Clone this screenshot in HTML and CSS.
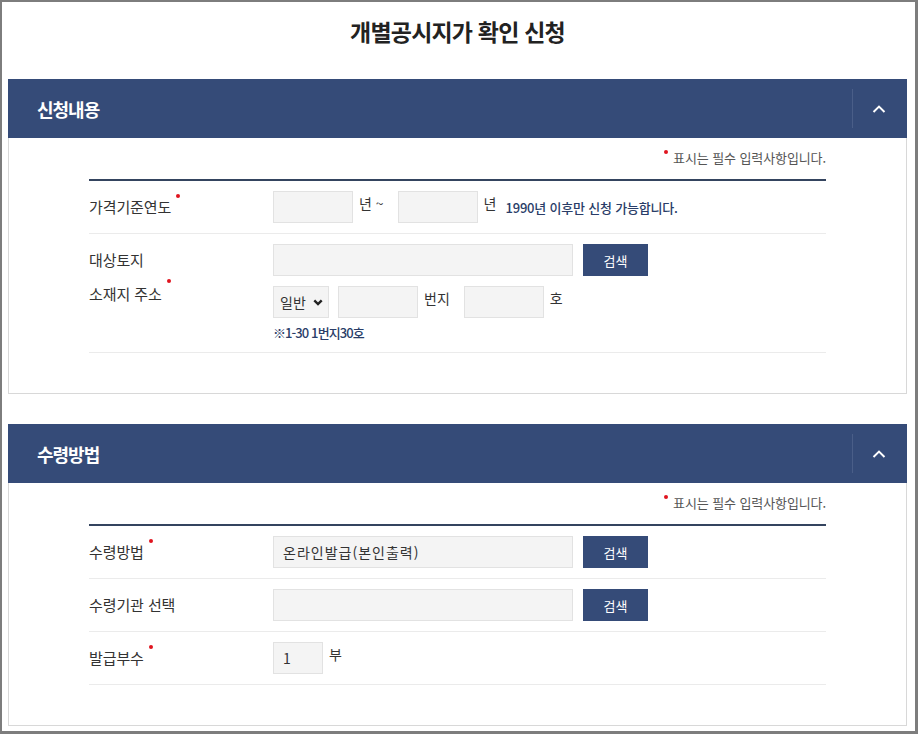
FILE: index.html
```html
<!DOCTYPE html>
<html lang="ko">
<head>
<meta charset="utf-8">
<title>개별공시지가 확인 신청</title>
<link rel="stylesheet" href="styles.css">
</head>
<body>
<div class="frame">
  <h1 class="title">개별공시지가 확인 신청</h1>

  <section class="panel">
    <div class="panel-head">
      <h2 class="panel-title">신청내용</h2>
      <button class="toggle" type="button" aria-label="접기">
        <svg width="14" height="8" viewBox="0 0 14 8"><polyline points="1.5,7 7,1.6 12.5,7" fill="none" stroke="#fff" stroke-width="2"/></svg>
      </button>
    </div>
    <div class="panel-body">
      <p class="req-note"><span class="dot"></span>표시는 필수 입력사항입니다.</p>
      <div class="rows">
        <div class="row">
          <div class="label"><span class="req">가격기준연도</span></div>
          <div class="field">
            <input class="inp w80" type="text">
            <span class="unit">년 ~</span>
            <input class="inp w80" type="text">
            <span class="unit">년</span>
            <span class="hint">1990년 이후만 신청 가능합니다.</span>
          </div>
        </div>
        <div class="row">
          <div class="label label-stack">
            <span class="line1">대상토지</span>
            <span class="line2"><span class="req">소재지 주소</span></span>
          </div>
          <div class="field-stack">
            <div class="field">
              <input class="inp w300" type="text">
              <button class="btn" type="button">검색</button>
            </div>
            <div class="field">
              <span class="sel-wrap">
                <select class="sel"><option>일반</option><option>산</option></select>
                <svg class="sel-arrow" width="10" height="7" viewBox="0 0 10 7"><polyline points="1.3,1.3 5,5 8.7,1.3" fill="none" stroke="#222" stroke-width="2.4"/></svg>
              </span>
              <input class="inp w80" type="text">
              <span class="unit">번지</span>
              <input class="inp w80" type="text">
              <span class="unit">호</span>
            </div>
            <p class="sub-hint">※1-30 1번지30호</p>
          </div>
        </div>
      </div>
    </div>
  </section>

  <section class="panel panel-second">
    <div class="panel-head">
      <h2 class="panel-title">수령방법</h2>
      <button class="toggle" type="button" aria-label="접기">
        <svg width="14" height="8" viewBox="0 0 14 8"><polyline points="1.5,7 7,1.6 12.5,7" fill="none" stroke="#fff" stroke-width="2"/></svg>
      </button>
    </div>
    <div class="panel-body">
      <p class="req-note"><span class="dot"></span>표시는 필수 입력사항입니다.</p>
      <div class="rows">
        <div class="row">
          <div class="label"><span class="req">수령방법</span></div>
          <div class="field">
            <input class="inp w300" type="text" value="온라인발급(본인출력)">
            <button class="btn" type="button">검색</button>
          </div>
        </div>
        <div class="row">
          <div class="label">수령기관 선택</div>
          <div class="field">
            <input class="inp w300" type="text">
            <button class="btn" type="button">검색</button>
          </div>
        </div>
        <div class="row">
          <div class="label"><span class="req">발급부수</span></div>
          <div class="field">
            <input class="inp w50" type="text" value="1">
            <span class="unit">부</span>
          </div>
        </div>
      </div>
    </div>
  </section>
</div>
</body>
</html>
```

FILE: styles.css
```css
* { box-sizing: border-box; }

html, body {
  margin: 0;
  padding: 0;
  background: #fff;
}

body {
  font-family: "Noto Sans CJK KR", "Noto Sans", sans-serif;
  color: #333;
}

.frame {
  width: 918px;
  height: 734px;
  border-style: solid;
  border-color: #7d7d7d;
  border-width: 2px 3px 3px 2px;
  padding: 0 8px 0 6px;
  overflow: hidden;
}

.title {
  margin: 0 0 31px;
  padding-top: 12px;
  font-size: 23px;
  line-height: 34px;
  font-weight: 700;
  color: #222;
  text-align: center;
  letter-spacing: -0.8px;
}

.panel-second { margin-top: 30px; }

.panel-head {
  height: 59px;
  background: #354b78;
  display: flex;
  align-items: center;
  justify-content: space-between;
  padding-left: 29px;
}

.panel-title {
  margin: 0;
  font-size: 18px;
  font-weight: 700;
  color: #fff;
  letter-spacing: -1px;
}

.toggle {
  width: 55px;
  height: 39px;
  padding: 0 2px 0 0;
  border: 0;
  border-left: 1px solid #4a5e88;
  background: transparent;
  display: flex;
  align-items: center;
  justify-content: center;
  cursor: pointer;
}

.panel-body {
  border: 1px solid #d8d8d8;
  border-top: 0;
  padding: 0 80px 40px 80px;
}

.req-note {
  margin: 0 0 12px;
  padding-top: 11px;
  line-height: 18px;
  font-size: 13px;
  color: #555;
  text-align: right;
  letter-spacing: -0.1px;
}

.dot {
  display: inline-block;
  width: 4px;
  height: 4px;
  border-radius: 50%;
  background: #e0141e;
  vertical-align: top;
  margin-top: 1px;
  margin-right: 5px;
}

.rows { border-top: 2px solid #34445f; }

.row {
  display: grid;
  grid-template-columns: 184px 1fr;
  padding: 10px 0;
  border-bottom: 1px solid #ebebeb;
}

.label {
  font-size: 15px;
  line-height: 32px;
  color: #333;
  letter-spacing: -0.1px;
}

.label-stack {
  display: flex;
  flex-direction: column;
}

.label-stack .line2 { line-height: 36px; }

.req::after {
  content: "";
  display: inline-block;
  width: 4px;
  height: 4px;
  border-radius: 50%;
  background: #e0141e;
  vertical-align: top;
  margin-top: 3px;
  margin-left: 5px;
}

.field {
  display: flex;
  align-items: center;
  height: 32px;
}

.field-stack {
  display: flex;
  flex-direction: column;
  gap: 10px;
}

.inp {
  height: 32px;
  border: 1px solid #e2e2e2;
  background: #f4f4f4;
  padding: 0 9px;
  font-family: "Noto Sans CJK KR", "Noto Sans", sans-serif;
  font-size: 14px;
  color: #333;
  letter-spacing: 1px;
  outline: none;
}

.w80 { width: 80px; }
.w50 { width: 50px; }
.w300 { width: 300px; }

.unit {
  font-size: 14px;
  color: #333;
  margin: 0 14px 0 6px;
  white-space: nowrap;
  align-self: flex-start;
  line-height: 24px;
}

.hint {
  font-size: 13px;
  color: #2a3d68;
  letter-spacing: -0.2px;
  margin-left: -5px;
  font-weight: 500;
}

.btn {
  height: 32px;
  width: 65px;
  margin-left: 10px;
  border: 0;
  background: #354b78;
  color: #fff;
  font-family: "Noto Sans CJK KR", "Noto Sans", sans-serif;
  font-size: 13px;
  cursor: pointer;
}

.sel-wrap {
  position: relative;
  display: inline-block;
  margin-right: 9px;
}

.sel {
  appearance: none;
  -webkit-appearance: none;
  width: 56px;
  height: 32px;
  border: 1px solid #e2e2e2;
  background: #f4f4f4;
  padding: 0 0 0 6px;
  font-family: "Noto Sans CJK KR", "Noto Sans", sans-serif;
  font-size: 14px;
  color: #333;
  outline: none;
}

.sel-arrow {
  position: absolute;
  right: 6px;
  top: 13px;
  pointer-events: none;
}

.sub-hint {
  margin: -4px 0 0;
  font-size: 13px;
  line-height: 18px;
  color: #2a3d68;
  letter-spacing: -0.9px;
  font-weight: 500;
}
```
